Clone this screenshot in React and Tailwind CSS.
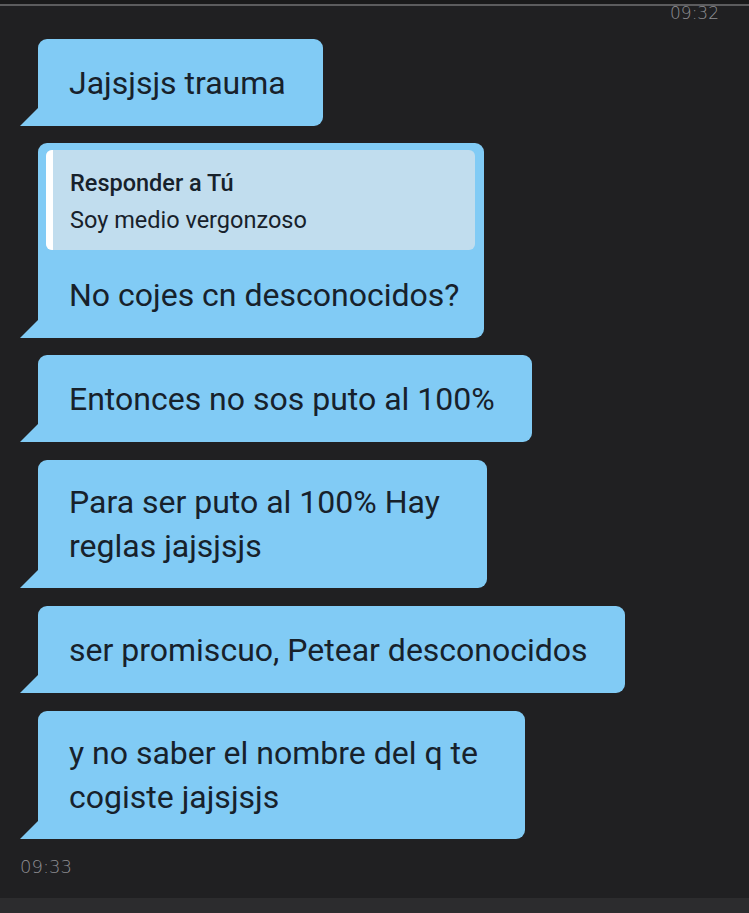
import React from "react";

const font = { fontFamily: "Roboto, 'Noto Sans', sans-serif" };

function Tail() {
  return (
    <svg
      className="absolute left-[-18px] bottom-0"
      width="18"
      height="18"
      viewBox="0 0 18 18"
    >
      <path d="M18 0 L18 18 L0 18 Z" fill="#81cbf5" />
    </svg>
  );
}

function Bubble({ children, className = "" }) {
  return (
    <div
      className={
        "relative bg-[#81cbf5] rounded-[9px] rounded-bl-none text-[#17212b] text-[32px] leading-[44px] whitespace-nowrap " +
        className
      }
    >
      {children}
      <Tail />
    </div>
  );
}

export default function App() {
  return (
    <div
      className="w-[749px] h-[913px] bg-[#202022] flex flex-col overflow-hidden"
      style={font}
    >
      <div className="h-[4px] bg-[#1a1a1b]" />
      <div className="h-[2px] bg-[#5c5c5e]" />
      <div className="flex justify-end pr-[30px] h-[33px]">
        <span className="text-[#8e8e92] text-[17px] leading-[15px] font-[DejaVu_Sans] font-stretch-condensed font-light">
          09:32
        </span>
      </div>

      <div className="flex flex-col pl-[38px]">
        <Bubble className="w-fit pl-[31px] pr-[37px] pt-[22px] pb-[21px]">
          Jajsjsjs trauma
        </Bubble>

        <Bubble className="w-[446px] mt-[17px] pt-[7px] pl-[8px] pr-[9px] pb-[21px]">
          <div className="flex bg-[#c1ddee] rounded-[6px] overflow-hidden">
            <div className="w-[7px] bg-white" />
            <div className="pl-[17px] pt-[15px] pb-[11px] text-[23.5px] leading-[37px]">
              <div className="font-medium">Responder a Tú</div>
              <div>Soy medio vergonzoso</div>
            </div>
          </div>
          <div className="pl-[23px] mt-[23px]">No cojes cn desconocidos?</div>
        </Bubble>

        <Bubble className="w-fit mt-[17px] pl-[31px] pr-[37px] pt-[22px] pb-[21px]">
          Entonces no sos puto al 100%
        </Bubble>

        <Bubble className="w-[449px] mt-[18px] pl-[31px] pt-[20px] pb-[20px]">
          Para ser puto al 100% Hay
          <br />
          reglas jajsjsjs
        </Bubble>

        <Bubble className="w-fit mt-[18px] pl-[31px] pr-[37px] pt-[22px] pb-[21px]">
          ser promiscuo, Petear desconocidos
        </Bubble>

        <Bubble className="w-[487px] mt-[18px] pl-[31px] pt-[20px] pb-[20px]">
          y no saber el nombre del q te
          <br />
          cogiste jajsjsjs
        </Bubble>
      </div>

      <div className="pl-[20px] mt-[18px] text-[#8e8e92] text-[18px] leading-[20px] font-[DejaVu_Sans] font-stretch-condensed font-light">
        09:33
      </div>

      <div className="flex-1" />
      <div className="h-[15px] bg-[#2c2c2e] shrink-0" />
    </div>
  );
}
